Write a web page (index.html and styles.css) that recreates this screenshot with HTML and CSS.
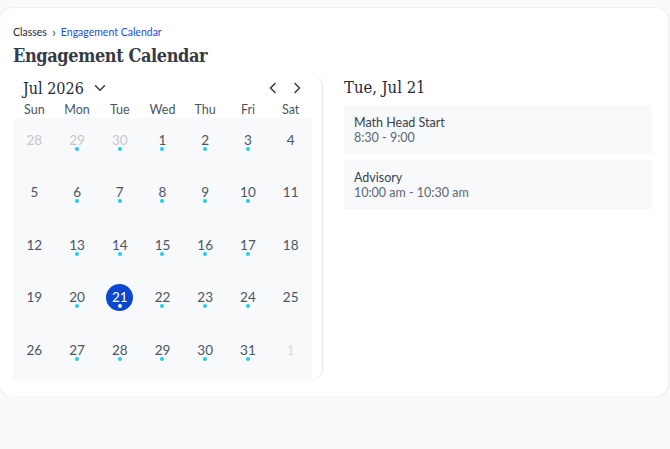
FILE: index.html
```html
<!DOCTYPE html>
<html lang="en">

<head>
    <meta charset="UTF-8">
    <meta name="viewport" content="width=device-width, initial-scale=1.0">
    <title>Engagement Calendar</title>
    <link rel="stylesheet" href="styles.css">
</head>

<body>

    <div class="page-card">
        <nav class="breadcrumb">
            <span>Classes</span>
            <span class="crumb-sep">&#8250;</span>
            <a href="#">Engagement Calendar</a>
        </nav>

        <h1>Engagement Calendar</h1>

        <div class="layout">
            <!-- Month view -->
            <div class="calendar">
                <div class="cal-header">
                    <div class="month-picker">
                        <span class="month-label">Jul 2026</span>
                        <svg width="14" height="14" viewBox="0 0 14 14" fill="none" stroke="#374151" stroke-width="1.6" stroke-linecap="round" stroke-linejoin="round"><path d="M2.5 4.8 7 9.3l4.5-4.5"/></svg>
                    </div>
                    <div class="cal-nav">
                        <button class="nav-btn" aria-label="Previous month"><svg width="14" height="14" viewBox="0 0 14 14" fill="none" stroke="#374151" stroke-width="1.6" stroke-linecap="round" stroke-linejoin="round"><path d="M9 2.5 4.5 7 9 11.5"/></svg></button>
                        <button class="nav-btn" aria-label="Next month"><svg width="14" height="14" viewBox="0 0 14 14" fill="none" stroke="#374151" stroke-width="1.6" stroke-linecap="round" stroke-linejoin="round"><path d="M5 2.5 9.5 7 5 11.5"/></svg></button>
                    </div>
                </div>

                <div class="weekdays">
                    <span>Sun</span><span>Mon</span><span>Tue</span><span>Wed</span><span>Thu</span><span>Fri</span><span>Sat</span>
                </div>

                <div class="days">
                    <div class="day muted"><span class="num">28</span></div>
                    <div class="day muted has-event"><span class="num">29</span></div>
                    <div class="day muted has-event"><span class="num">30</span></div>
                    <div class="day has-event"><span class="num">1</span></div>
                    <div class="day has-event"><span class="num">2</span></div>
                    <div class="day has-event"><span class="num">3</span></div>
                    <div class="day"><span class="num">4</span></div>

                    <div class="day"><span class="num">5</span></div>
                    <div class="day has-event"><span class="num">6</span></div>
                    <div class="day has-event"><span class="num">7</span></div>
                    <div class="day has-event"><span class="num">8</span></div>
                    <div class="day has-event"><span class="num">9</span></div>
                    <div class="day has-event"><span class="num">10</span></div>
                    <div class="day"><span class="num">11</span></div>

                    <div class="day"><span class="num">12</span></div>
                    <div class="day has-event"><span class="num">13</span></div>
                    <div class="day has-event"><span class="num">14</span></div>
                    <div class="day has-event"><span class="num">15</span></div>
                    <div class="day has-event"><span class="num">16</span></div>
                    <div class="day has-event"><span class="num">17</span></div>
                    <div class="day"><span class="num">18</span></div>

                    <div class="day"><span class="num">19</span></div>
                    <div class="day has-event"><span class="num">20</span></div>
                    <div class="day has-event selected"><span class="num">21</span></div>
                    <div class="day has-event"><span class="num">22</span></div>
                    <div class="day has-event"><span class="num">23</span></div>
                    <div class="day has-event"><span class="num">24</span></div>
                    <div class="day"><span class="num">25</span></div>

                    <div class="day"><span class="num">26</span></div>
                    <div class="day has-event"><span class="num">27</span></div>
                    <div class="day has-event"><span class="num">28</span></div>
                    <div class="day has-event"><span class="num">29</span></div>
                    <div class="day has-event"><span class="num">30</span></div>
                    <div class="day has-event"><span class="num">31</span></div>
                    <div class="day faint"><span class="num">1</span></div>
                </div>
            </div>

            <!-- Selected day agenda -->
            <div class="agenda">
                <h2>Tue, Jul 21</h2>
                <div class="event">
                    <div class="event-title">Math Head Start</div>
                    <div class="event-time">8:30 - 9:00</div>
                </div>
                <div class="event">
                    <div class="event-title">Advisory</div>
                    <div class="event-time">10:00 am - 10:30 am</div>
                </div>
            </div>
        </div>
    </div>

</body>

</html>
```

FILE: styles.css
```css
/* Page */
body {
    margin: 0;
    font-family: "Lato", "Noto Sans", sans-serif;
    background-color: #f8f9f9;
    color: #374151;
}

.page-card {
    margin: 8px 2px 0 0;
    height: 388px;
    box-sizing: border-box;
    padding: 17px 16px 0 13px;
    background-color: #fff;
    border-radius: 12px;
    box-shadow: 0 0 0 1px #eceeef, 0 1px 3px rgba(0, 0, 0, 0.04);
}

/* Breadcrumb */
.breadcrumb {
    display: flex;
    align-items: center;
    gap: 5px;
    font-size: 10.5px;
    line-height: 14px;
    color: #1f2937;
}

.crumb-sep {
    font-size: 14px;
    color: #4b5563;
}

.breadcrumb a {
    color: #1d4ed8;
    text-decoration: none;
}

h1 {
    margin: 4px 0 0;
    font-family: "DejaVu Serif Condensed", "DejaVu Serif", serif;
    font-size: 18px;
    letter-spacing: -0.4px;
    line-height: 26px;
    font-weight: bold;
    color: #353b45;
}

.layout {
    display: flex;
    gap: 21px;
    margin-top: 6px;
}

/* Calendar */
.calendar {
    width: 299px;
    padding-right: 10px;
    border-right: 1px solid #e6e8ea;
    border-radius: 0 12px 12px 0;
    box-shadow: 1px 0 2px rgba(0, 0, 0, 0.03);
}

.cal-header {
    display: flex;
    justify-content: space-between;
    align-items: center;
    height: 26px;
    padding: 0 8px 0 10px;
}

.month-picker {
    display: flex;
    align-items: center;
    gap: 9px;
}

.month-label {
    font-family: "DejaVu Serif Condensed", "DejaVu Serif", serif;
    font-size: 16px;
    color: #1f2937;
}

.cal-nav {
    display: flex;
    gap: 10px;
}

.nav-btn {
    display: flex;
    padding: 0;
    border: none;
    background: none;
    cursor: pointer;
}

.weekdays {
    display: grid;
    grid-template-columns: repeat(7, 1fr);
    height: 17px;
    align-items: center;
    font-size: 12.5px;
    color: #4b5563;
    text-align: center;
}

.days {
    display: grid;
    grid-template-columns: repeat(7, 1fr);
    grid-auto-rows: 52.4px;
    background-color: #f8f9fa;
}

.day {
    position: relative;
    display: flex;
    justify-content: center;
    padding-top: 13px;
    font-size: 13.5px;
    color: #4b5563;
}

.day .num {
    position: relative;
    z-index: 1;
    line-height: 18px;
}

.day.muted {
    color: #c3c7cc;
}

.day.faint {
    color: #d9dcdf;
}

.has-event::after {
    content: "";
    position: absolute;
    top: 29px;
    left: 50%;
    width: 4px;
    height: 4px;
    margin-left: -2px;
    border-radius: 50%;
    background-color: #1fcfe9;
    z-index: 1;
}

.selected {
    color: #fff;
}

.selected::before {
    content: "";
    position: absolute;
    top: 9px;
    left: 50%;
    width: 27px;
    height: 27px;
    margin-left: -13.5px;
    border-radius: 50%;
    background-color: #0b46cf;
}

.selected::after {
    background-color: #fff;
}

/* Agenda */
.agenda {
    flex: 1;
    padding-top: 2px;
}

.agenda h2 {
    margin: 0 0 6px;
    font-family: "DejaVu Serif Condensed", "DejaVu Serif", serif;
    font-size: 16.5px;
    line-height: 22px;
    font-weight: normal;
    color: #1f2937;
}

.event {
    padding: 11px 10px 9px;
    margin-bottom: 6px;
    background-color: #f8f9fa;
    font-size: 12.5px;
    line-height: 14.5px;
}

.event-title {
    color: #374151;
}

.event-time {
    color: #5b6675;
}
```
